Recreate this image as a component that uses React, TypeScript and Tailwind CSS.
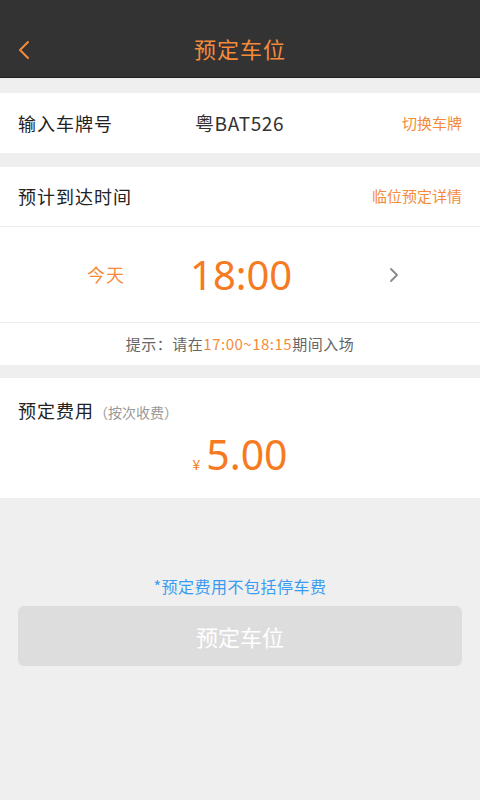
import React from 'react'

const font = "font-['Noto_Sans_CJK_SC','Noto_Sans',sans-serif]"
const numFont = "font-['Noto_Sans','Liberation_Sans',sans-serif]"

const App: React.FC = () => {
    return (
        <div className={`w-[480px] h-[800px] bg-[#efefef] ${font} flex flex-col`}>
            {/* Header */}
            <div className="h-[78px] bg-[#333333] border-b border-[#1f1f1f] flex items-end pb-[14px] relative">
                <div className="w-full flex items-center justify-center h-[30px]">
                    <span className="text-[22px] tracking-[1px] text-[#f58b3a] leading-none">预定车位</span>
                </div>
                <svg className="absolute left-[16px] top-[40px]" width="16" height="20" viewBox="0 0 16 20" fill="none">
                    <path d="M12 2 L4 10 L12 18" stroke="#f58b3a" strokeWidth="2" strokeLinecap="round" strokeLinejoin="round" />
                </svg>
            </div>

            {/* Plate */}
            <div className="mt-[15px] h-[60px] bg-white flex items-center px-[18px]">
                <span className="w-[177px] text-[18px] tracking-[1px] text-[#222]">输入车牌号</span>
                <span className="flex-1 text-[19px] text-[#333] tracking-[0.6px]">粤BAT526</span>
                <span className="text-[15px] text-[#f58b3a]">切换车牌</span>
            </div>

            {/* Arrival */}
            <div className="mt-[14px] bg-white flex flex-col">
                <div className="h-[60px] flex items-center justify-between px-[18px] border-b border-[#ececec]">
                    <span className="text-[18px] tracking-[1px] text-[#222]">预计到达时间</span>
                    <span className="text-[15px] text-[#f58b3a]">临位预定详情</span>
                </div>
                <div className="h-[96px] flex items-center border-b border-[#ececec]">
                    <span className="w-[87px]" />
                    <span className="w-[103px] text-[18px] tracking-[1px] text-[#f58b3a]">今天</span>
                    <span className={`${numFont} w-[198px] text-[40px] text-[#f57a22] leading-none`}>18:00</span>
                    <svg width="12" height="18" viewBox="0 0 12 18" fill="none">
                        <path d="M3 3 L9 9 L3 15" stroke="#8a8a8a" strokeWidth="1.8" strokeLinecap="round" strokeLinejoin="round" />
                    </svg>
                </div>
                <div className="h-[42px] flex items-center justify-center text-[15px] tracking-[0.5px] text-[#666]">
                    提示：请在<span className="text-[#f58b3a]">17:00~18:15</span>期间入场
                </div>
            </div>

            {/* Fee */}
            <div className="mt-[13px] h-[120px] bg-white flex flex-col px-[18px]">
                <div className="mt-[19px] flex items-baseline">
                    <span className="text-[18px] tracking-[1px] text-[#222]">预定费用</span>
                    <span className="text-[14px] text-[#999]">（按次收费）</span>
                </div>
                <div className="mt-[10px] flex items-baseline justify-center">
                    <span className="text-[14px] text-[#f57a22] mr-[6px]">¥</span>
                    <span className={`${numFont} text-[41px] text-[#f57a22] leading-none`}>5.00</span>
                </div>
            </div>

            {/* Footer */}
            <div className="mt-[76px] flex flex-col items-center px-[18px]">
                <span className="text-[16px] tracking-[0.5px] text-[#3a9cf0]">*预定费用不包括停车费</span>
                <button className="mt-[8px] w-full h-[60px] rounded-[6px] bg-[#dddddd] text-white text-[22px]">
                    预定车位
                </button>
            </div>
        </div>
    )
}

export default App
